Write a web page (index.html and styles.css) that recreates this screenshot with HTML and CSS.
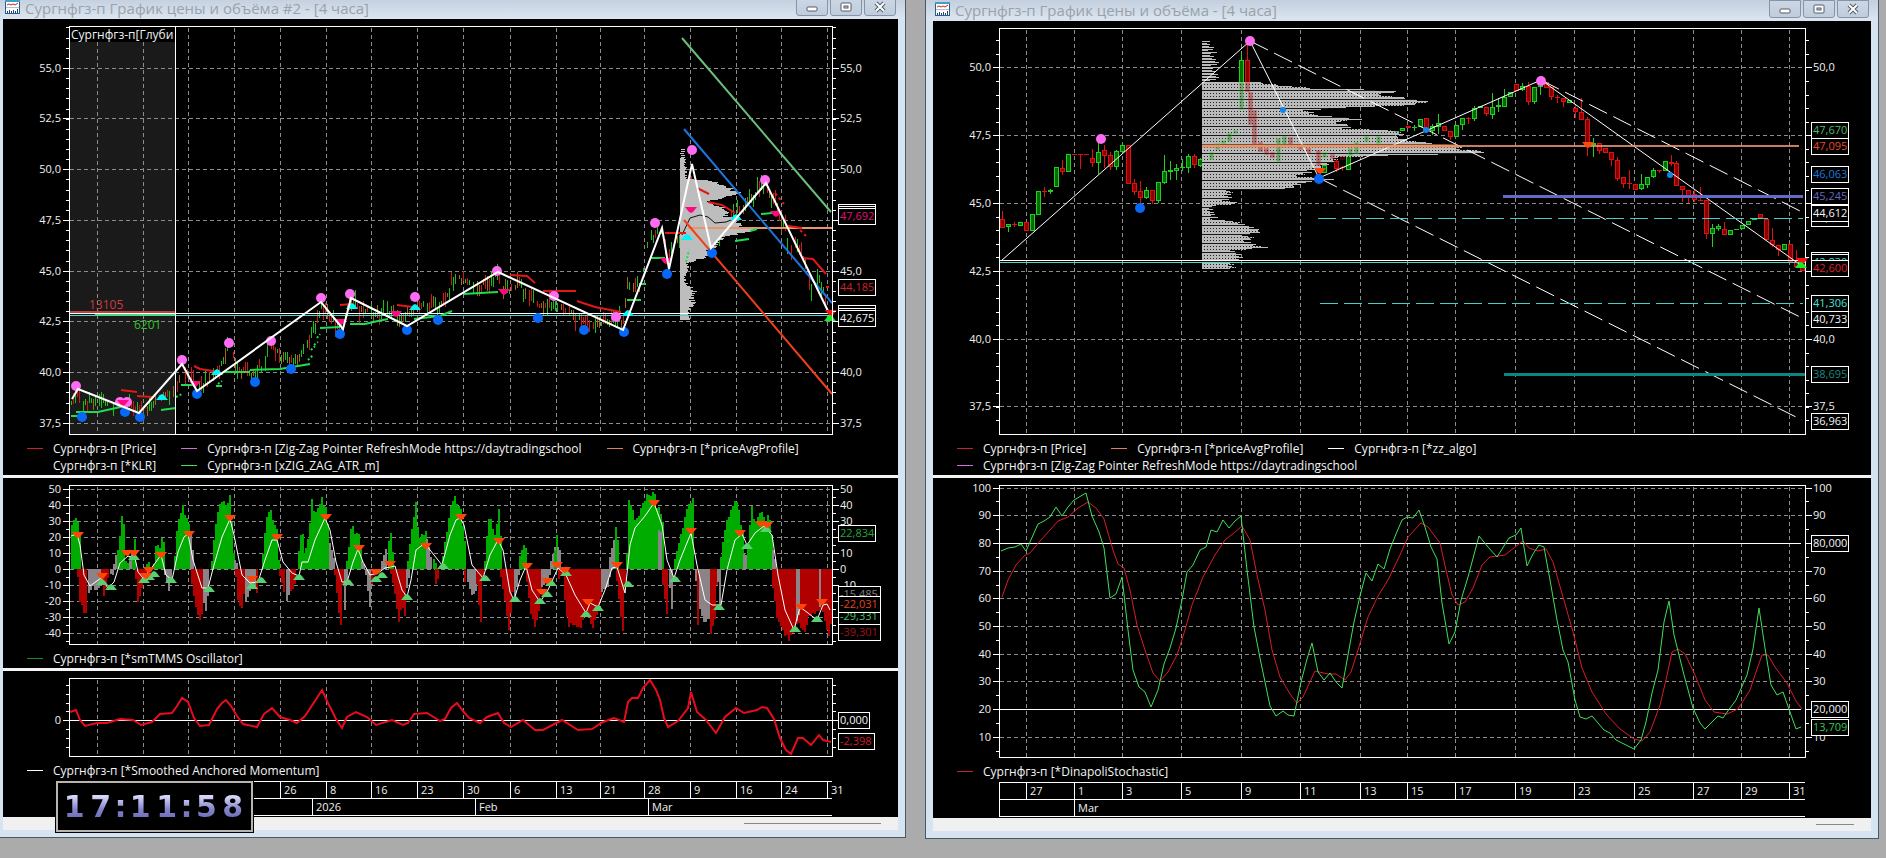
FILE: index.html
```html
<!DOCTYPE html>
<html lang="ru">
<head>
<meta charset="utf-8">
<title>Сургнфгз-п График цены и объёма</title>
<link rel="stylesheet" href="styles.css">
</head>
<body>
<main class="desktop">
  <section class="window window-left">
    <header class="titlebar">
      <svg class="app-icon" viewBox="0 0 15 14"><rect width="15" height="14" fill="#2d5f86"/><rect y="0" width="15" height="2" fill="#3fa0c4"/><rect x="1" y="2" width="13" height="11" fill="#fff"/><path d="M1 7.500h13" stroke="#a8c4d8"/><path d="M2 5l2-1 2 1 2-1 2 1 3-2" stroke="#c22" fill="none"/><path d="M2.500 13v-2M4.500 13v-3M6.500 13v-2M8.500 13v-3M10.500 13v-2M12.500 13v-4" stroke="#247"/></svg>
      <h1 class="title">Сургнфгз-п График цены и объёма #2 - [4 часа]</h1>
      <div class="controls">
        <button class="control" aria-label="Свернуть"><svg viewBox="0 0 14 12"><rect x="2" y="6" width="10" height="4" rx="1" fill="#fff" stroke="#545c68"/></svg></button>
        <button class="control" aria-label="Развернуть"><svg viewBox="0 0 14 12"><rect x="2" y="2" width="10" height="8" rx="1" fill="#fff" stroke="#545c68"/><rect x="5" y="5" width="4" height="2" fill="#c9d4e2" stroke="#545c68"/></svg></button>
        <button class="control" aria-label="Закрыть"><svg viewBox="0 0 14 12"><path d="M3 2l8 8M11 2l-8 8" stroke="#545c68" stroke-width="4"/><path d="M3 2l8 8M11 2l-8 8" stroke="#fff" stroke-width="2"/></svg></button>
      </div>
    </header>
    <div class="body">
      <section class="panel">
        <svg class="chart" id="price-left" viewBox="3 19 895 421"></svg>
        <ul class="legend">
          <li class="item"><span class="swatch red"></span>Сургнфгз-п [Price]</li>
          <li class="item"><span class="swatch violet"></span>Сургнфгз-п [Zig-Zag Pointer RefreshMode https://daytradingschool</li>
          <li class="item"><span class="swatch salmon"></span>Сургнфгз-п [*priceAvgProfile]</li>
        </ul>
        <ul class="legend legend-end">
          <li class="item"><span class="swatch"></span>Сургнфгз-п [*KLR]</li>
          <li class="item"><span class="swatch lime"></span>Сургнфгз-п [xZIG_ZAG_ATR_m]</li>
        </ul>
      </section>
      <section class="panel">
        <svg class="chart" id="oscillator" viewBox="3 478 895 172"></svg>
        <ul class="legend legend-end"><li class="item"><span class="swatch green"></span>Сургнфгз-п [*smTMMS Oscillator]</li></ul>
      </section>
      <section class="panel">
        <svg class="chart" id="momentum" viewBox="3 671 895 91"></svg>
        <ul class="legend legend-end"><li class="item"><span class="swatch white"></span>Сургнфгз-п [*Smoothed Anchored Momentum]</li></ul>
        <svg class="chart" id="axis-left" viewBox="3 780 895 37"></svg>
      </section>
    </div>
    <div class="scrollbar"><span class="thumb thumb-wide"></span></div>
    <div class="clock"><span>1</span><span>7</span><span>:</span><span>1</span><span>1</span><span>:</span><span>5</span><span>8</span></div>
  </section>

  <section class="window">
    <header class="titlebar">
      <svg class="app-icon" viewBox="0 0 15 14"><rect width="15" height="14" fill="#2d5f86"/><rect y="0" width="15" height="2" fill="#3fa0c4"/><rect x="1" y="2" width="13" height="11" fill="#fff"/><path d="M1 7.500h13" stroke="#a8c4d8"/><path d="M2 5l2-1 2 1 2-1 2 1 3-2" stroke="#c22" fill="none"/><path d="M2.500 13v-2M4.500 13v-3M6.500 13v-2M8.500 13v-3M10.500 13v-2M12.500 13v-4" stroke="#247"/></svg>
      <h2 class="title">Сургнфгз-п График цены и объёма - [4 часа]</h2>
      <div class="controls">
        <button class="control" aria-label="Свернуть"><svg viewBox="0 0 14 12"><rect x="2" y="6" width="10" height="4" rx="1" fill="#fff" stroke="#545c68"/></svg></button>
        <button class="control" aria-label="Развернуть"><svg viewBox="0 0 14 12"><rect x="2" y="2" width="10" height="8" rx="1" fill="#fff" stroke="#545c68"/><rect x="5" y="5" width="4" height="2" fill="#c9d4e2" stroke="#545c68"/></svg></button>
        <button class="control" aria-label="Закрыть"><svg viewBox="0 0 14 12"><path d="M3 2l8 8M11 2l-8 8" stroke="#545c68" stroke-width="4"/><path d="M3 2l8 8M11 2l-8 8" stroke="#fff" stroke-width="2"/></svg></button>
      </div>
    </header>
    <div class="body">
      <section class="panel">
        <svg class="chart" id="price-right" viewBox="933 21 938 419"></svg>
        <ul class="legend">
          <li class="item"><span class="swatch red"></span>Сургнфгз-п [Price]</li>
          <li class="item"><span class="swatch salmon"></span>Сургнфгз-п [*priceAvgProfile]</li>
          <li class="item"><span class="swatch white"></span>Сургнфгз-п [*zz_algo]</li>
        </ul>
        <ul class="legend legend-end"><li class="item"><span class="swatch violet"></span>Сургнфгз-п [Zig-Zag Pointer RefreshMode https://daytradingschool</li></ul>
      </section>
      <section class="panel">
        <svg class="chart" id="stochastic" viewBox="933 478 938 285"></svg>
        <ul class="legend legend-end"><li class="item"><span class="swatch red"></span>Сургнфгз-п [*DinapoliStochastic]</li></ul>
        <svg class="chart" id="axis-right" viewBox="933 781 938 37"></svg>
      </section>
    </div>
    <div class="scrollbar"><span class="thumb"></span></div>
  </section>
</main>
<script src="charts.js"></script>
</body>
</html>
```

FILE: styles.css
```css
* { box-sizing: border-box; }

body {
  margin: 0;
  min-height: 100vh;
  background: #ababab;
  overflow: hidden;
  font-family: "Open Sans", "Noto Sans", sans-serif;
}

.desktop {
  display: grid;
  grid-template-columns: minmax(0, 906fr) minmax(0, 954fr);
  gap: 19px;
  align-items: start;
  padding-right: 7px;
}

.window {
  position: relative;
  display: flex;
  flex-direction: column;
  padding: 0 7px 7px;
  border: 1px solid #4a5866;
  border-top: 0;
  background: #d6e3f0;
}

.window-left {
  margin-top: -2px;
  margin-left: -5px;
}

.titlebar {
  display: flex;
  align-items: flex-start;
  height: 21px;
  margin: 0 -7px;
  padding: 0 9px;
  gap: 5px;
  background: linear-gradient(#c3cfde, #dbe6f1);
}

.app-icon {
  width: 15px;
  height: 14px;
  margin-top: 2px;
}

.title {
  flex: 1;
  margin: 0;
  color: #9aa1aa;
  font-size: 15px;
  font-weight: 400;
  line-height: 20px;
  white-space: nowrap;
}

.controls {
  display: flex;
  gap: 2px;
}

.control {
  display: flex;
  justify-content: center;
  align-items: center;
  width: 32px;
  height: 18px;
  padding: 0;
  border: 1px solid #8793a8;
  border-radius: 0 0 3px 3px;
  background: linear-gradient(#ccd7e5, #bfccdc);
}

.control svg {
  width: 14px;
  height: 12px;
}

.body { background: #000; }

.panel + .panel {
  border-top: 3px solid #f4f4f4;
}

.chart {
  display: block;
  width: 100%;
  height: auto;
  overflow: hidden;
}

.chart text {
  font-size: 11px;
  fill: #f0f0f0;
}

.chart .wide-label {
  font-size: 12px;
}

.legend {
  display: flex;
  gap: 25px;
  margin: 0;
  padding: 0 0 0 24px;
  list-style: none;
  color: #f4f4f4;
  font-size: 12px;
  line-height: 17px;
  white-space: nowrap;
}

.legend-end { padding-bottom: 1px; }

.item {
  display: flex;
  align-items: center;
  gap: 10px;
}

.swatch {
  width: 16px;
  height: 1px;
}

.red { background: #c8202c; }
.violet { background: #d070d8; }
.salmon { background: #e08058; }
.lime { background: #40e060; }
.green { background: #109028; }
.white { background: #fff; }

.scrollbar {
  display: flex;
  justify-content: flex-end;
  align-items: center;
  height: 13px;
  padding-right: 17px;
  background: #f0f0f0;
}

.thumb {
  width: 38px;
  height: 1px;
  background: #888;
}

.thumb-wide { width: 137px; }

.clock {
  position: absolute;
  left: 59px;
  bottom: 4px;
  display: grid;
  grid-template-columns: 26fr 26fr 13fr 26fr 26fr 13fr 26fr 26fr;
  width: 199px;
  height: 53px;
  padding: 0 7px 0 5px;
  border: 1px solid #000;
  background: #000;
  box-shadow: inset 0 0 0 2px #b8b4b0;
  font-family: "DejaVu Sans", sans-serif;
  font-size: 30px;
  font-weight: 700;
  line-height: 51px;
  text-align: center;
}

.clock span {
  color: transparent;
  background: linear-gradient(#d8d8fa 30%, #8484cc 55%, #6c6cb4 75%);
  background-clip: text;
  -webkit-background-clip: text;
}
```

FILE: charts.js
```js
const NS = "http://www.w3.org/2000/svg";

function el(parent, name, attrs, text) {
  const node = document.createElementNS(NS, name);
  for (const key in attrs) node.setAttribute(key, attrs[key]);
  if (text !== undefined) node.textContent = text;
  parent.appendChild(node);
  return node;
}

const rect = (p, x, y, w, h, fill, more) =>
  el(p, "rect", { x, y, width: w, height: h, fill, "shape-rendering": "crispEdges", ...more });
const label = (p, x, y, s, fill, anchor, cls) => {
  const t = el(p, "text", { x, y, "text-anchor": anchor || "start" }, s);
  if (fill) t.style.fill = fill;
  if (cls) t.setAttribute("class", cls);
};
const line = (p, pts, color, width, more) =>
  el(p, "polyline", { points: pts, fill: "none", stroke: color, "stroke-width": width || 1, ...more });
const pairs = s => s.trim().split(/\s+/).map(q => q.split(",").map(Number));
const dots = (p, s, r, fill) => pairs(s).forEach(([cx, cy]) => el(p, "circle", { cx, cy, r, fill }));
const marks = (p, s, dir, fill) => pairs(s).forEach(([x, y]) =>
  el(p, "path", { d: `M${x - 6} ${y - 3 * dir}h12l-4 ${5 * dir}l-2 ${dir}l-2 ${-dir}z`, fill }));

let seed = 7;
const rnd = () => (seed = (seed * 16807) % 2147483647) / 2147483647;

function lerp(points, x) {
  for (let i = 1; i < points.length; i++) {
    const [x0, y0] = points[i - 1], [x1, y1] = points[i];
    if (x <= x1) return y0 + (y1 - y0) * (x - x0) / (x1 - x0);
  }
  return points[points.length - 1][1];
}

function grid(p, f, xs, ys) {
  const dash = { stroke: "#8c8c8c", "stroke-dasharray": "4 3", "shape-rendering": "crispEdges" };
  xs.forEach(x => el(p, "path", { d: `M${x + 0.5} ${f.top + 2}V${f.bottom}`, ...dash }));
  ys.forEach(y => el(p, "path", { d: `M${f.left + 1} ${y + 0.5}H${f.right}`, ...dash }));
}

function frame(p, f, minors) {
  rect(p, f.left, f.top, f.right - f.left + 1, 1, "#fff");
  rect(p, f.left, f.bottom, f.right - f.left + 1, 1, "#fff");
  rect(p, f.left, f.top, 1, f.bottom - f.top + 1, "#fff");
  rect(p, f.right, f.top, 1, f.bottom - f.top + 1, "#fff");
  minors.forEach(y => {
    rect(p, f.left - 3, y, 3, 1, "#fff");
    rect(p, f.right + 1, y, 3, 1, "#fff");
  });
}

function scale(p, f, items, skipRight) {
  items.forEach(([y, s]) => {
    rect(p, f.left - 6, y, 6, 1, "#fff");
    rect(p, f.right + 1, y, 6, 1, "#fff");
    label(p, f.left - 8, y + 4, s, null, "end");
    if (!skipRight.includes(s)) label(p, f.right + 8, y + 4, s);
  });
}

function tag(p, x, y, w, s, color) {
  rect(p, x + 0.5, y + 0.5, w, 16, "#000", { stroke: "#fff" });
  if (s) label(p, x + 2, y + 12, s, color);
}

function range(start, end, step) {
  const out = [];
  for (let v = start; v <= end; v += step) out.push(Math.round(v));
  return out;
}

const XL = [97, 143, 188, 234, 280, 326, 371, 417, 463, 510, 556, 600, 644, 690, 736, 781, 827];
const XR = [1026, 1074, 1122, 1181, 1241, 1300, 1360, 1407, 1455, 1515, 1574, 1634, 1693, 1741, 1789];

/* left price chart */
function priceLeft() {
  const p = document.getElementById("price-left");
  const f = { left: 69, right: 832, top: 26, bottom: 434 };
  rect(p, 70, 27, 105, 407, "#1a1a1a");
  grid(p, f, XL, [68, 118, 169, 220, 271, 321, 372, 423]);

  const path = pairs("71,404 77,390 80,408 90,402 110,402 135,408 150,408 160,398 175,392 182,368 190,380 197,390 215,375 228,348 238,368 250,375 262,366 272,345 282,360 300,357 312,332 321,305 330,318 343,325 350,302 360,308 375,314 395,316 410,312 420,303 440,308 452,282 462,278 475,290 497,275 505,292 520,284 530,300 545,308 560,305 575,316 590,328 610,320 623,322 627,282 640,285 648,240 662,230 668,262 675,242 684,228 690,165 694,210 705,232 712,248 730,220 750,200 765,185 775,205 785,228 790,255 797,240 805,265 810,292 820,280 828,305");
  for (let x = 71; x < 829; x += 2) {
    const y = lerp(path, x), up = lerp(path, x + 4) < y + 1;
    const h = 4 + rnd() * 13, c = rnd() < 0.25 ? "#a06a10" : (rnd() < 0.72 ? up : !up) ? "#18c018" : "#d01818";
    if (rnd() < 0.85) rect(p, x, Math.round(y - h * rnd()), 1, Math.round(h), c);
  }

  const widths = pairs("158,5 178,6 180,25 183,40 187,50 190,54 192,60 196,48 200,30 205,34 207,45 212,50 216,45 218,54 222,58 226,60 228,72 231,72 233,60 236,45 240,38 245,34 250,30 256,27 260,18 262,8 270,7 278,4 285,8 290,14 295,13 300,12 304,16 308,10 315,10 319,8");
  for (let y = 149; y < 158; y += 2) rect(p, 680 + rnd() * 2, y, 4, 1, "#c4c4c4");
  for (let y = 158; y < 320; y++) {
    const w = lerp(widths, y);
    rect(p, 680, y, Math.round(w + (rnd() - 0.5) * Math.min(8, w / 2)), 1, "#bdbdbd");
  }
  line(p, "682,235 690,218 700,215 708,217 715,223 726,222 736,218", "#111");
  rect(p, 688, 227, 144, 2, "#e8946c");

  rect(p, 70, 311, 105, 2, "#c04040");
  rect(p, 70, 313, 763, 1, "#fff");
  rect(p, 70, 315, 763, 1, "#48d8d0");
  rect(p, 95, 314, 80, 2, "#48d888");

  line(p, "682,38 831,212", "#68c07c", 2);
  line(p, "684,129 832,303", "#1c74e0", 2);
  line(p, "684,220 832,394", "#f04018", 2);

  "71,416 82,416|76,412 98,412 125,406|161,410 176,408|181,385 195,385|216,386 222,386|225,372 250,372|250,370 280,369 310,364|320,328 340,327|350,324 365,324 378,321 388,319|414,319 440,316 452,311|463,294 498,292|627,300 641,300|651,258 665,258|761,214 772,213|735,241 749,239|750,231 757,229|639,284 646,284".split("|").forEach(s => line(p, s, "#20dc50", 2));
  "176,397 182,394|308,360 313,355|311,350 315,346|314,345 318,342|317,338 320,334|218,384 222,381|686,262 689,250".split("|").forEach(s => line(p, s, "#20dc50", 2, { "stroke-dasharray": "2 2" }));
  "121,390 137,392|137,396 152,397|194,366 200,369 213,371|340,305 352,304|397,305 413,307|510,275 527,276 535,283|543,291 576,291|577,301 595,307 621,312|665,233 686,233|697,188 709,194|708,202 722,205 735,213|788,226 802,228|802,258 813,259 826,274".split("|").forEach(s => line(p, s, "#e01818", 2));
  "775,193 784,204|800,230 806,236|826,287 832,287".split("|").forEach(s => line(p, s, "#e01818", 2, { "stroke-dasharray": "3 3" }));

  dots(p, "76,386 120,402 127,402 182,360 229,343 271,341 321,298 350,294 415,297 497,271 554,296 616,317 655,223 692,150 765,180", 5, "#ff6cf4");
  dots(p, "82,417 125,412 140,417 197,394 255,382 291,369 340,334 407,330 438,320 538,318 584,330 624,332 667,274 712,253", 5, "#0868f8");
  marks(p, "123,403 195,384 341,322 396,314 504,292 666,261 691,210 776,214", 1, "#ff0880");
  marks(p, "162,397 217,372 352,306 415,307 628,313 736,217 687,237", -1, "#00f4f8");
  line(p, "72,399 78,389 139,413 182,364 197,391 321,302 343,329 351,298 407,326 498,272 623,330 662,228 669,269 692,164 711,248 766,183 828,311", "#fff", 2);
  marks(p, "831,313", 1, "#ff1010");
  marks(p, "830,318", -1, "#10f020");

  rect(p, 70, 27, 105, 15, "#000");
  el(el(p, "clipPath", { id: "head" }), "rect", { x: 70, y: 27, width: 104, height: 15 });
  label(el(p, "g", { "clip-path": "url(#head)" }), 71, 39, "Сургнфгз-п[Глубина]", null, null, "wide-label");
  rect(p, 175, 27, 1, 407, "#fff");
  label(p, 89, 309, "13105", "#cc3c40", null, "wide-label");
  label(p, 134, 329, "6201", "#30c030", null, "wide-label");

  frame(p, f, range(27.4, 431, 10.14));
  scale(p, f, [[68, "55,0"], [118, "52,5"], [169, "50,0"], [220, "47,5"], [271, "45,0"], [321, "42,5"], [372, "40,0"], [423, "37,5"]], ["47,5", "42,5"]);
  [204, 206].forEach(y => tag(p, 838, y, 37, "", null));
  tag(p, 838, 208, 37, "47,692", "#e01078");
  tag(p, 838, 279, 37, "44,185", "#d02028");
  [305, 308].forEach(y => tag(p, 838, y, 37, "", null));
  tag(p, 838, 310, 37, "42,675", "#f4f4f4");
}

/* oscillator histogram with its signal line */
function oscillator() {
  const p = document.getElementById("oscillator");
  const f = { left: 69, right: 832, top: 485, bottom: 644 };
  const G = "#00ac00", R = "#b00000", N = "#8a8488";
  grid(p, f, XL, [489, 505, 521, 537, 553, 569, 585, 601, 617, 633]);
  const series = [
    [G, "71,27 76,34 79,22"], [R, "77,-5 79,-20 82,-26 84,-32 86,-22"], [N, "88,-15 92,-11 95,-15 100,-10"],
    [R, "101,-8 103,-17 107,-6"], [N, "110,-3 112,-4"], [N, "113,3 115,9"], [G, "117,12 119,20 121,34 123,28 125,5"],
    [G, "127,4 129,8"], [N, "129,5 131,9"], [G, "132,12 134,20"], [R, "135,-6 137,-21 140,-14 145,-4"], [G, "146,3 149,5"],
    [G, "153,3 156,20 158,10 161,19 163,18"], [N, "164,-4 168,-14 170,-8"], [G, "174,8 177,32 179,34 182,42 184,35 187,30 189,29"],
    [N, "190,25 193,6"], [R, "191,-10 194,-22 197,-28 200,-32 202,-25"], [N, "203,-22 205,-28 208,-12"],
    [G, "211,5 214,25 217,38 220,42 223,44 226,40 229,45 231,30 233,10"], [N, "234,6 236,4"], [R, "235,-5 237,-20 241,-25 244,-12"],
    [N, "245,-20 250,-12 255,-11"], [R, "256,-16 257,-14"], [G, "262,10 265,30 267,38 270,37 273,28 276,24 278,6"],
    [R, "279,-4 283,-14"], [N, "286,-20 289,-16"], [R, "290,-14 294,-10"], [G, "298,12 301,28 304,10"],
    [G, "305,14 308,22 311,45 314,32 318,42 321,44 325,38 328,25"], [N, "329,16 334,5"], [R, "334,-4 338,-28 341,-39 342,-10"], [N, "344,-25 346,-10"],
    [G, "346,5 348,14 351,30 354,22 358,23 360,12"], [N, "361,5 364,2"], [N, "365,-4 369,-23 371,-10"], [R, "371,-10 373,-4"],
    [N, "381,5 386,15"], [G, "388,17 391,25 392,10"], [R, "390,-3 394,-15 398,-33 401,-22 404,-30 405,-6"], [N, "406,-12 408,-6"],
    [G, "407,5 410,20 415,42 418,20 422,22 426,24"], [N, "426,20 431,5"], [G, "433,6 435,4"], [R, "435,-10 437,-6"],
    [G, "442,8 446,24 450,38 453,46 456,40 459,42 462,26 464,18"], [R, "464,-8 465,-6"], [N, "467,-8 471,-17 475,-14"], [R, "476,-10 480,-34 482,-8"],
    [G, "484,5 487,30 489,35 492,25 494,22 498,37 500,20"], [R, "500,-5 505,-25 508,-37 511,-25 513,-4"], [N, "514,-18 518,-4"],
    [G, "519,8 523,16 526,12"], [R, "526,-8 530,-28 535,-37 539,-22 541,-5"], [N, "541,-12 549,-4"], [N, "550,5 554,14"], [G, "554,12 556,22"],
    [N, "557,14 559,12"], [R, "558,-6 562,-3"], [R, "564,-20 568,-38 571,-34 576,-36 580,-37 584,-28 588,-30 592,-38 596,-28 600,-18"],
    [N, "601,-14 607,-11 609,-5"], [N, "609,8 614,22"], [G, "615,28 618,14"], [R, "616,-8 620,-30 622,-38 624,-14"],
    [G, "626,10 628,44 631,40 634,32 638,32 642,42 646,46 651,47 653,50 656,40 660,34 663,28"], [N, "658,26 661,24"], [R, "662,-10 667,-34"],
    [N, "669,-12 671,-25 672,-5"], [G, "674,6 678,16 682,27 685,38 690,42 693,44"], [N, "695,-8 698,-22 702,-33 706,-32 709,-33"],
    [R, "697,-34 698,-34"], [R, "710,-40 714,-32 716,-10"], [N, "717,-8 719,-25 720,-5"], [G, "720,8 724,26 730,38 733,42 736,44 739,32 742,22"],
    [N, "743,10 747,8"], [G, "747,12 751,41 754,28 758,34 762,38 764,30 768,34 771,22"], [N, "772,12 775,3"],
    [R, "772,-12 776,-30 782,-40 788,-44 792,-40 797,-32 804,-40 808,-30 816,-26 822,-26 828,-42 831,-34"],
    [N, "796,-33 798,-30"], [N, "819,-25 820,-25"]];
  series.forEach(([color, s]) => {
    const pts = pairs(s);
    for (let x = pts[0][0]; x <= pts[pts.length - 1][0]; x += 2) {
      const v = lerp(pts, x) * (0.94 + rnd() * 0.1), h = Math.round(Math.abs(v) * 1.6);
      rect(p, x, v > 0 ? 569 - h : 569, 2, h, color);
    }
  });
  line(p, "71,536 77,534 80,545 84,575 90,586 101,578 108,588 114,582 120,563 128,556 135,558 138,572 143,578 150,570 161,555 166,575 172,580 178,552 184,537 188,534 193,560 202,588 208,588 214,565 222,537 230,519 234,535 242,575 250,583 258,582 265,560 272,540 277,540 283,562 292,573 299,576 302,562 308,562 315,540 325,518 330,530 336,562 342,582 347,582 353,562 358,549 363,562 370,575 378,573 385,568 395,566 402,590 407,597 411,580 416,550 425,543 430,550 442,565 450,535 456,520 460,518 464,525 472,565 483,578 490,555 498,540 503,550 510,592 514,600 520,580 526,566 532,590 540,602 548,590 558,568 566,575 575,595 586,613 590,603 598,607 605,590 612,568 617,567 625,593 630,545 635,528 645,516 654,503 662,525 667,560 674,578 680,560 691,533 697,565 705,600 712,605 721,605 727,570 735,540 742,534 747,545 755,533 764,526 772,535 778,575 785,610 794,630 800,607 808,613 817,620 823,605 827,604 830,610", "#fff");
  marks(p, "102,582 111,587 134,557 144,580 149,577 154,574 171,580 209,589 252,586 261,580 299,577 348,582 376,579 382,575 407,597 443,566 485,578 515,599 540,601 547,594 551,583 566,573 586,614 598,608 628,584 675,579 719,607 747,546 766,529 795,629 817,619", -1, "#58d070");
  marks(p, "78,535 102,576 127,553 134,553 146,576 149,570 161,555 189,534 230,518 252,579 277,537 326,517 359,548 376,572 390,564 426,546 461,517 499,541 527,566 542,592 547,581 557,565 565,570 588,602 617,565 654,503 691,531 740,533 761,524 767,525 801,607 822,602", 1, "#ff4408");
  frame(p, f, range(497, 641, 16));
  scale(p, f, [[489, "50"], [505, "40"], [521, "30"], [537, "20"], [553, "10"], [569, "0"], [585, "-10"], [601, "-20"], [617, "-30"], [633, "-40"]], ["20", "-20", "-30", "-40"]);
  tag(p, 838, 525, 37, "22,834", "#20a838");
  tag(p, 838, 586, 42, "-15,485", "#808080");
  tag(p, 838, 608, 42, "-29,331", "#48c068");
  tag(p, 838, 596, 42, "-22,031", "#e84020");
  tag(p, 838, 624, 42, "-39,301", "#a01018");
}

function momentum() {
  const p = document.getElementById("momentum");
  const f = { left: 69, right: 832, top: 678, bottom: 756 };
  grid(p, f, XL, []);
  rect(p, 63, 720, 776, 1, "#fff");
  line(p, "70,712 76,710 80,720 85,726 97,723 107,723 120,719 133,720 141,725 152,722 160,714 172,713 177,706 182,698 188,702 194,718 200,726 209,725 217,709 222,703 226,700 231,706 237,716 243,724 257,727 264,714 272,708 280,717 290,720 297,723 305,716 313,704 322,690 328,703 336,719 342,728 347,717 356,712 367,717 376,725 392,720 403,725 408,723 414,714 427,713 440,721 445,719 451,708 457,703 463,711 469,718 480,723 487,717 498,713 504,723 511,727 523,720 535,730 543,730 562,720 578,730 592,729 603,722 614,718 624,722 628,702 632,698 638,698 643,688 650,680 656,690 660,700 664,718 668,727 678,721 688,708 691,692 697,712 706,720 716,733 725,717 736,708 744,713 757,710 762,707 767,708 774,719 780,738 786,750 791,754 798,738 803,738 811,745 819,735 823,740 831,742", "#e80c1c", 2);
  frame(p, f, [685, 694, 703, 711, 729, 738, 747]);
  label(p, 61, 724, "0", null, "end");
  tag(p, 838, 712, 31, "0,000", "#f4f4f4");
  tag(p, 838, 733, 36, "-2,398", "#d01828");
}

function axis(id, left, right, top, ticks, months) {
  const p = document.getElementById(id);
  [1, 18, 35].forEach(dy => rect(p, left, top + dy, right - left, 1, "#fff"));
  rect(p, left, top + 1, 1, 35, "#fff");
  ticks.forEach(([x, s]) => {
    rect(p, x, top + 1, 1, 17, "#fff");
    label(p, x + 4, top + 14, s);
  });
  months.forEach(([x, s]) => {
    rect(p, x, top + 18, 1, 17, "#fff");
    label(p, x + 4, top + 31, s);
  });
}

/* right price chart */
function priceRight() {
  const p = document.getElementById("price-right");
  const f = { left: 999, right: 1805, top: 28, bottom: 434 };
  grid(p, f, XR, [67, 135, 203, 271, 339, 406]);

  const candle = (q, s) => {
    const [x, c, a, b, hi, lo] = s.split(" ");
    const edge = c === "G" ? "#20d020" : "#e01010", fill = c === "G" ? "#006c00" : "#880000";
    rect(q, +x, +(hi || a), 1, Math.max(1, (lo || b) - (hi || a)), edge);
    if (b - a < 3) rect(q, x - 2, +a, 5, Math.max(1, b - a), edge);
    else rect(q, x - 2 + 0.5, +a + 0.5, 4, b - a - 1, fill, { stroke: edge });
  };
  const main = "1002 R 219 228 211 228|1008 G 224 227 224 232|1014 R 224 225 222 227|1020 G 222 226|1026 R 222 231|1032 G 214 231|1038 G 191 215|1044 R 191 192 187 197|1050 G 190 192 189 194|1056 G 167 187|1062 R 168 172 160 175|1068 G 154 172|1074 R 154 155|1080 R 154 155 154 169|1086 R 154 155|1092 R 158 163 149 167|1098 G 152 163 142 174|1104 R 150 156 145 168|1110 R 155 167 152 170|1116 G 151 167 150 170|1122 G 145 152 142 152|1128 R 145 184|1134 R 183 192 179 195|1140 R 191 198 181 203|1146 G 190 198 187 199|1152 R 190 201 190 204|1158 G 182 201 182 203|1164 G 171 183 155 184|1170 G 170 172 161 180|1176 G 168 171 164 180|1182 G 167 168 159 171|1188 G 156 168 154 173|1194 R 156 165 154 168|1200 G 159 166 158 167|1241 G 60 85 53 92|1247 R 60 84 45 90|1324 G 165 173 160 173|1336 R 161 169 160 172|1342 R 167 168 166 171|1348 G 156 170 150 170|1366 R 136 138|1372 R 136 138|1384 R 137 140|1390 G 131 140 130 142|1396 G 131 134|1402 G 128 131|1408 R 126 128|1414 G 127 128 125 131|1420 G 119 127|1426 R 118 130|1432 G 126 131 124 135|1438 G 123 127 114 134|1444 R 126 131|1450 R 131 137 131 140|1456 G 125 137|1462 G 118 125 118 130|1468 R 118 119 117 124|1474 G 108 119 106 121|1480 G 106 108|1486 R 107 114 107 116|1492 G 107 115 93 119|1498 G 105 107 98 112|1504 G 97 107 89 107|1510 G 92 97|1516 R 84 91|1522 G 86 90 83 91|1528 R 86 102 82 105|1534 G 87 102 87 104|1540 G 84 87 84 95|1546 R 82 88|1551 R 87 97 87 100|1557 R 97 98 95 103|1563 R 98 102 98 107|1569 G 100 103|1575 R 108 112 104 118|1581 R 112 120 98 120|1587 R 119 143 117 156|1593 G 143 145 138 157|1599 R 143 151 143 154|1605 R 148 153|1611 R 152 160 152 166|1617 R 160 179 157 181|1623 R 177 184 177 188|1629 R 183 184 170 189|1635 R 184 190|1641 G 184 189 174 190|1647 G 177 185 177 188|1653 G 170 177 168 178|1659 R 170 171 170 173|1665 G 161 171|1671 R 162 164 155 166|1676 R 163 186 161 186|1682 R 186 190 186 202|1688 R 190 196 190 203|1694 R 194 200 190 202|1700 R 200 201 187 201|1706 R 200 234 200 239|1712 G 228 234 224 247|1718 G 226 229 224 231|1724 R 229 235 222 235|1730 G 230 235|1736 G 229 230|1742 G 225 229|1748 G 221 225|1754 G 218 220|1760 R 214 218|1766 R 219 240|1772 R 240 245 228 247|1778 R 245 250 245 256|1784 G 244 250|1790 R 244 262|1796 R 260 267 250 268|1802 R 264 271";

  const pat = el(p, "pattern", { id: "weave", width: 6, height: 9, patternUnits: "userSpaceOnUse" });
  rect(pat, 0, 0, 6, 9, "#bababa");
  rect(pat, 0, 0, 6, 1, "#181818");
  [[1, 3], [4, 3], [1, 6], [4, 6]].forEach(([x, y]) => rect(pat, x, y, 1, 1, "#202020"));

  main.split("|").forEach(s => candle(p, s));
  const widths = pairs("41,8 44,6 52,11 62,13 75,14 79,12 81,12 82,55 85,80 88,110 89,160 91,194 94,175 96,190 98,205 101,226 105,206 107,140 110,105 114,110 117,140 119,158 122,130 125,150 128,142 130,190 134,200 137,192 142,220 145,256 149,256 150,280 153,277 155,190 157,132 160,135 165,122 168,112 172,106 176,95 179,130 182,100 185,95 188,85 190,28 196,26 200,24 203,35 206,10 212,8 216,14 219,8 220,27 225,45 228,50 230,60 235,44 238,50 241,42 243,48 247,62 250,32 255,38 258,36 262,30 268,30");
  for (let y = 41; y < 269; y += 1) {
    if (y < 82 && y % 3 === 0) continue;
    const w = lerp(widths, y) + ((y * 7) % 5 - 2) * 2;
    rect(p, 1202, y, Math.round(w), 1, "url(#weave)");
  }
  const ghost = el(p, "g", { opacity: 0.35 });
  "1211 G 152 160|1217 G 143 150|1223 G 140 144|1229 G 133 142|1235 G 130 134|1241 G 82 110|1247 R 82 92|1250 R 92 125|1254 R 110 146|1260 R 142 152|1266 R 148 155|1272 R 152 158|1278 G 138 162|1284 G 136 146|1290 R 137 146|1300 R 144 150|1308 R 148 154|1318 R 150 166|1324 G 152 158|1332 R 154 159|1342 R 156 160|1350 G 148 156|1356 G 142 154|1366 G 136 142|1378 G 136 144".split("|").forEach(s => candle(ghost, s));

  line(p, "1001,261 1250,41 1319,178 1541,80 1802,266", "#fff");
  const dash = { "stroke-dasharray": "20 7" };
  line(p, "1250,41 1802,318", "#fff", 1, dash);
  line(p, "1319,178 1802,420", "#fff", 1, dash);
  line(p, "1541,80 1802,212", "#fff", 1, dash);

  rect(p, 1202, 144, 256, 4, "#f08850", { opacity: 0.5 });
  rect(p, 1202, 145, 597, 2, "#e89470", { opacity: 0.85 });
  rect(p, 1503, 195, 300, 3, "#6468c8");
  rect(p, 1504, 373, 301, 3, "#088880");
  [[1318, 218], [1320, 303]].forEach(([x, y]) =>
    el(p, "path", { d: `M${x} ${y + 0.5}H1803`, stroke: "#40d0c8", "stroke-dasharray": "18 6", "shape-rendering": "crispEdges" }));
  rect(p, 1000, 260, 805, 1, "#fff");
  rect(p, 1000, 262, 805, 1, "#48d8d0");

  marks(p, "1320,171 1588,145", 1, "#ff4810");
  dots(p, "1250,41 1101,139 1541,81", 5, "#ff6cf4");
  dots(p, "1140,208 1319,179", 5, "#0868f8");
  dots(p, "1283,110 1426,130 1670,175", 3, "#1084f0");
  frame(p, f, range(40.2, 424, 13.58).filter(y => ![67, 135, 203, 271, 339, 406].includes(y)));
  marks(p, "1802,261", 1, "#ff1010");
  marks(p, "1801,265", -1, "#10f020");
  scale(p, f, [[67, "50,0"], [135, "47,5"], [203, "45,0"], [271, "42,5"], [339, "40,0"], [406, "37,5"]], ["47,5", "45,0", "42,5"]);
  const x = 1811, w = 37;
  tag(p, x, 122, w, "47,670", "#50b868");
  tag(p, x, 138, w, "47,095", "#e84828");
  tag(p, x, 166, w, "46,063", "#1878d8");
  tag(p, x, 188, w, "45,245", "#6468c0");
  tag(p, x, 210, w, "44,442", "#40d8d0");
  tag(p, x, 205, w, "44,612", "#f4f4f4");
  tag(p, x, 252, w, "", null);
  tag(p, x, 254, w, "42,830", "#40d8d0");
  tag(p, x, 260, w, "42,600", "#d82028");
  tag(p, x, 295, w, "41,306", "#40e0d8");
  tag(p, x, 311, w, "40,733", "#f4f4f4");
  tag(p, x, 366, w, "38,695", "#188880");
  tag(p, x, 413, w, "36,963", "#f4f4f4");
}

function stochastic() {
  const p = document.getElementById("stochastic");
  const f = { left: 999, right: 1805, top: 485, bottom: 757 };
  grid(p, f, XR, [488, 515, 571, 598, 626, 654, 681, 737]);
  rect(p, 1000, 543, 801, 1, "#fff");
  rect(p, 1000, 709, 801, 1, "#fff");
  line(p, "1002,597 1008,580 1016,565 1024,556 1030,553 1040,541 1050,530 1058,521 1068,517 1078,508 1088,502 1096,508 1104,519 1108,533 1113,550 1118,564 1124,568 1130,590 1137,625 1145,650 1153,673 1160,681 1168,672 1177,655 1185,630 1192,605 1203,577 1215,555 1225,540 1235,532 1242,526 1250,540 1257,575 1265,610 1272,650 1280,677 1290,694 1297,703 1303,697 1315,671 1328,674 1336,674 1345,680 1351,672 1358,650 1368,617 1378,596 1388,580 1400,555 1408,537 1421,523 1428,527 1440,543 1446,570 1452,595 1458,605 1465,602 1473,588 1482,565 1490,557 1505,555 1515,547 1523,541 1529,548 1538,551 1546,549 1553,562 1563,597 1573,632 1582,668 1592,692 1606,714 1620,729 1634,739 1642,741 1650,732 1660,705 1666,680 1672,652 1678,649 1685,654 1695,675 1705,700 1714,712 1727,714 1738,709 1750,690 1756,672 1762,655 1768,655 1775,667 1787,683 1796,701 1802,709", "#d81c28");
  line(p, "1001,551 1008,548 1015,547 1021,544 1026,551 1038,524 1044,521 1050,517 1056,507 1062,516 1068,507 1074,500 1086,493 1092,516 1099,532 1104,548 1110,598 1116,594 1122,577 1128,630 1133,670 1139,687 1145,692 1151,707 1158,690 1164,664 1170,648 1176,628 1182,600 1187,572 1193,565 1200,550 1206,547 1211,530 1217,532 1223,520 1229,528 1235,521 1241,516 1247,570 1254,627 1260,658 1265,682 1270,706 1276,716 1283,711 1288,715 1294,716 1301,682 1307,659 1312,643 1318,672 1324,680 1330,673 1336,682 1342,688 1348,655 1354,622 1360,596 1366,573 1372,581 1378,564 1384,569 1390,549 1396,534 1402,520 1407,517 1413,518 1419,510 1425,527 1431,547 1437,559 1442,603 1449,644 1455,632 1461,600 1468,577 1479,536 1488,547 1497,557 1509,538 1516,535 1521,528 1527,566 1533,554 1539,545 1544,547 1550,580 1557,620 1563,650 1568,662 1575,700 1580,717 1586,719 1592,716 1604,730 1610,733 1616,740 1634,749 1641,740 1646,722 1652,693 1658,670 1664,622 1669,601 1674,635 1679,655 1684,675 1693,708 1700,723 1705,729 1712,722 1718,716 1723,718 1730,708 1736,700 1747,675 1753,649 1759,608 1765,648 1771,685 1777,695 1783,692 1790,712 1796,729 1801,727", "#40e058");
  frame(p, f, [501, 529, 557, 585, 612, 640, 668, 695, 723, 751]);
  scale(p, f, [[488, "100"], [515, "90"], [543, "80"], [571, "70"], [598, "60"], [626, "50"], [654, "40"], [681, "30"], [709, "20"], [737, "10"]], ["80", "20"]);
  tag(p, 1811, 535, 37, "80,000", "#f4f4f4");
  tag(p, 1811, 701, 37, "20,000", "#f4f4f4");
  tag(p, 1811, 719, 37, "13,709", "#30c850");
}

priceLeft();
oscillator();
momentum();
axis("axis-left", 69, 832, 780, [[280, "26"], [326, "8"], [371, "16"], [417, "23"], [463, "30"], [510, "6"], [556, "13"], [600, "21"], [644, "28"], [690, "9"], [736, "16"], [781, "24"], [827, "31"]], [[312, "2026"], [475, "Feb"], [648, "Mar"]]);
priceRight();
stochastic();
axis("axis-right", 999, 1805, 781, XR.map((x, i) => [x, ["27", "1", "3", "5", "9", "11", "13", "15", "17", "19", "23", "25", "27", "29", "31"][i]]), [[1074, "Mar"]]);
```
